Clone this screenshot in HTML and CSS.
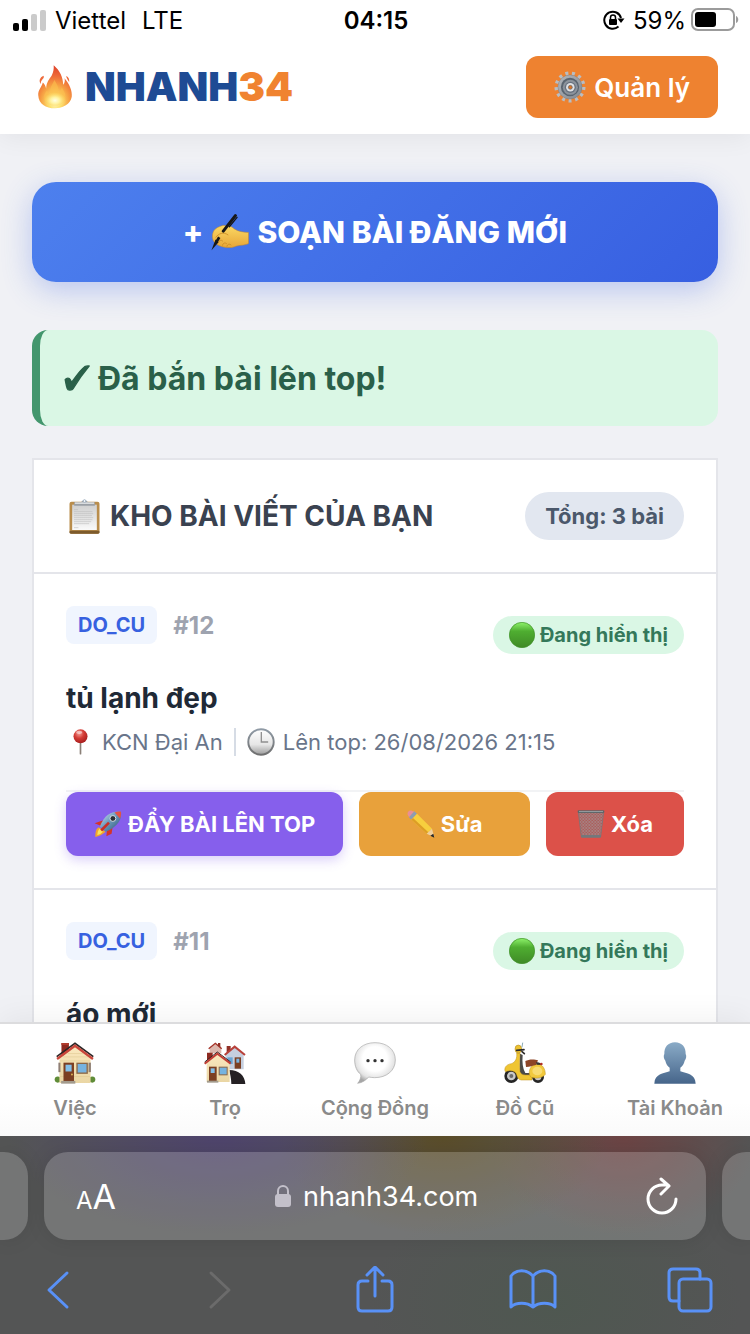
FILE: index.html
```html
<!DOCTYPE html>
<html lang="vi">
<head>
    <meta charset="UTF-8">
    <meta name="viewport" content="width=device-width, initial-scale=1.0">
    <title>NHANH34 - Quản lý bài đăng</title>
    <link rel="stylesheet" href="styles.css">
</head>
<body>
    <!-- Icon sprite -->
    <svg class="sprite" width="0" height="0" aria-hidden="true">
        <defs>
            <radialGradient id="gFire" cx="0.5" cy="0.88" r="0.85">
                <stop offset="0" stop-color="#fffbd8"/>
                <stop offset="0.2" stop-color="#fde06a"/>
                <stop offset="0.5" stop-color="#f6a043"/>
                <stop offset="0.75" stop-color="#ee6a38"/>
                <stop offset="1" stop-color="#e0452c"/>
            </radialGradient>
            <radialGradient id="gGlow">
                <stop offset="0" stop-color="#fffde6"/>
                <stop offset="0.4" stop-color="#fff3a0"/>
                <stop offset="1" stop-color="#fde06a" stop-opacity="0"/>
            </radialGradient>
            <linearGradient id="gSteel" x1="0" y1="0" x2="1" y2="1">
                <stop offset="0" stop-color="#b4b8bd"/>
                <stop offset="1" stop-color="#82888f"/>
            </linearGradient>
            <linearGradient id="gHand" x1="0" y1="0" x2="0" y2="1">
                <stop offset="0" stop-color="#fbd964"/>
                <stop offset="1" stop-color="#e8a637"/>
            </linearGradient>
            <linearGradient id="gPaper" x1="0" y1="0" x2="0" y2="1">
                <stop offset="0" stop-color="#cfcfcf"/>
                <stop offset="1" stop-color="#fafafa"/>
            </linearGradient>
            <linearGradient id="gGreen" x1="0" y1="0" x2="0" y2="1">
                <stop offset="0" stop-color="#8df26a"/>
                <stop offset="0.35" stop-color="#4fae31"/>
                <stop offset="1" stop-color="#3f8a26"/>
            </linearGradient>
            <radialGradient id="gPin" cx="0.4" cy="0.3" r="0.7">
                <stop offset="0" stop-color="#f49a92"/>
                <stop offset="0.5" stop-color="#d33a34"/>
                <stop offset="1" stop-color="#a81f1f"/>
            </radialGradient>
            <linearGradient id="gClock" x1="0" y1="0" x2="0" y2="1">
                <stop offset="0" stop-color="#ffffff"/>
                <stop offset="0.6" stop-color="#e6e6e6"/>
                <stop offset="1" stop-color="#9b9b9b"/>
            </linearGradient>
            <linearGradient id="gClockRim" x1="0" y1="0" x2="0" y2="1">
                <stop offset="0" stop-color="#8f9aa5"/>
                <stop offset="1" stop-color="#6f6f6f"/>
            </linearGradient>
            <linearGradient id="gRocket" x1="0" y1="0" x2="1" y2="1">
                <stop offset="0" stop-color="#dbe8f1"/>
                <stop offset="0.45" stop-color="#6d9cc0"/>
                <stop offset="1" stop-color="#284c6d"/>
            </linearGradient>
            <linearGradient id="gWall" x1="0" y1="0" x2="0" y2="1">
                <stop offset="0" stop-color="#fbe9bf"/>
                <stop offset="1" stop-color="#ead6a4"/>
            </linearGradient>
            <radialGradient id="gBubble" cx="0.5" cy="0.4" r="0.6">
                <stop offset="0.5" stop-color="#ffffff"/>
                <stop offset="0.8" stop-color="#e4e4e4"/>
                <stop offset="1" stop-color="#a6a6a6"/>
            </radialGradient>
            <linearGradient id="gPerson" x1="0" y1="0" x2="0" y2="1">
                <stop offset="0" stop-color="#8aabc7"/>
                <stop offset="1" stop-color="#46658a"/>
            </linearGradient>
            <pattern id="pMesh" width="9" height="9" patternUnits="userSpaceOnUse">
                <path d="M0 0 9 9M9 0 0 9" stroke="#a39a9c" stroke-width="1.6"/>
            </pattern>
        </defs>

        <symbol id="fire" viewBox="0 0 108 134">
            <path fill="url(#gFire)" d="M50 1C70 18 78 38 79 60C84 53 85 47 83 40C98 58 107 78 105 97C101 120 78 132 54 132C26 132 4 118 3 92C2 75 14 66 17 53C22 58 26 65 27 72C28 52 36 44 44 32C49 22 51 12 50 1Z"/>
            <path fill="#ee6b3c" d="M19 33C24 42 9 45 11 58C4 50 7 38 19 33ZM88 34C93 34 99 42 97 52C94 46 90 42 88 34Z"/>
            <path fill="#fbc04e" opacity="0.6" d="M52 46C62 62 66 70 64 84C70 80 74 74 74 68C86 84 90 100 80 114C70 126 38 127 26 114C16 102 22 86 30 78C32 86 36 88 40 88C36 70 46 62 52 46Z"/>
            <ellipse cx="54" cy="108" rx="34" ry="25" fill="url(#gGlow)"/>
        </symbol>

        <symbol id="gear" viewBox="0 0 96 98">
            <circle cx="48" cy="49" r="42" fill="none" stroke="#b9bdc2" stroke-width="11" pathLength="26" stroke-dasharray="0.9 1.1"/>
            <circle cx="48" cy="49" r="37" fill="url(#gSteel)" stroke="#6a7078" stroke-width="1"/>
            <circle cx="48" cy="49" r="28" fill="#5a6470"/>
            <circle cx="49" cy="50" r="23" fill="#8c939c"/>
            <circle cx="49" cy="50" r="17" fill="#687280"/>
            <circle cx="49" cy="50" r="13" fill="#dfe1e4"/>
            <circle cx="49" cy="50" r="6" fill="#d8752a" stroke="#5b626b" stroke-width="2"/>
        </symbol>

        <symbol id="writing" viewBox="0 0 112 110">
            <path fill="url(#gHand)" stroke="#c98a24" stroke-width="1.5" d="M4 62C6 48 14 42 24 38C32 34 40 32 46 36C54 34 62 38 70 45C80 52 96 54 111 55L111 88C100 94 82 92 70 97C58 102 40 100 27 95C12 90 2 80 4 62Z"/>
            <path fill="none" stroke="#c98a24" stroke-width="2.5" stroke-linecap="round" d="M14 69C22 58 36 52 50 62M22 83C24 78 30 76 34 80M34 93C34 86 42 84 46 88M47 96C48 89 55 88 59 92"/>
            <path stroke="#171717" stroke-width="9" stroke-linecap="round" d="M72 5 36 51"/>
            <path stroke="#171717" stroke-width="4" stroke-linecap="round" d="M77 10 54 38"/>
            <path fill="#171717" d="M13 76 22 84 1 108Z"/>
            <path stroke="#171717" stroke-width="8" d="M24 69 15 84"/>
        </symbol>

        <symbol id="check" viewBox="0 0 75 76">
            <path fill="currentColor" stroke="currentColor" stroke-width="4" stroke-linejoin="round" d="M3 43C7 37 15 37 18 43L22 51C34 34 47 14 60 5C64 3 69 2 73 3C55 24 40 46 27 68C23 74 11 75 9 69C6 62 5 52 3 43Z"/>
        </symbol>

        <symbol id="clipboard" viewBox="0 0 92 105">
            <rect x="1" y="8" width="90" height="96" rx="6" fill="#b98d4c"/>
            <rect x="1" y="95" width="90" height="9" rx="4" fill="#7d5b2c"/>
            <rect x="9" y="17" width="74" height="76" fill="url(#gPaper)"/>
            <path stroke="#b9b9b9" stroke-width="2" stroke-dasharray="5 1" d="M15 32H27M15 38H70M15 44H72M15 50H68M15 56H72M15 62H70M15 68H66M15 74H60M15 86H28"/>
            <path fill="#9ba0a6" d="M15 10H36C38 2 54 2 56 10H77V20H15Z"/>
            <path fill="#d9dcdf" d="M17 10H75V15H17Z"/>
            <circle cx="46" cy="6" r="4" fill="#fff" stroke="#a2b3c3" stroke-width="3"/>
        </symbol>

        <symbol id="dot" viewBox="0 0 76 76">
            <circle cx="38" cy="38" r="37" fill="url(#gGreen)" stroke="#3f8f28" stroke-width="2"/>
        </symbol>

        <symbol id="pin" viewBox="0 0 44 78">
            <path stroke="#8b8078" stroke-width="5" stroke-linecap="round" d="M22 38V74"/>
            <circle cx="22" cy="22" r="21" fill="url(#gPin)"/>
            <ellipse cx="18" cy="10" rx="9" ry="5" fill="#fff" opacity="0.5"/>
        </symbol>

        <symbol id="clock" viewBox="0 0 86 86">
            <circle cx="43" cy="43" r="39" fill="url(#gClock)" stroke="url(#gClockRim)" stroke-width="6"/>
            <path fill="none" stroke="#8f8f8f" stroke-width="4" d="M44 12V43H65"/>
        </symbol>

        <symbol id="rocket" viewBox="0 0 86 84">
            <path fill="#d4342a" d="M24 32 42 30 26 50 2 40ZM40 60 58 46 54 72 38 80Z"/>
            <path fill="#f2a52b" d="M14 52C4 60 4 70 4 82C16 80 24 76 36 66Z"/>
            <path fill="#fae45c" d="M18 56C10 64 12 70 10 76C18 74 24 70 28 64Z"/>
            <path fill="url(#gRocket)" d="M83 4C86 26 76 48 36 66L18 50C32 12 56 2 83 4Z"/>
            <path fill="#e45144" d="M83 4C84 12 82 20 80 25L63 7C70 4 76 3 83 4Z"/>
            <circle cx="58" cy="25" r="9" fill="#2b3137" stroke="#d9e2ea" stroke-width="3"/>
            <path fill="none" stroke="#c92f27" stroke-width="8" d="M22 62 46 38"/>
        </symbol>

        <symbol id="pencil" viewBox="0 0 84 84">
            <path fill="#e98f96" d="M2 14C0 6 6 0 14 2L24 6 8 24Z"/>
            <path fill="#8d9db0" d="M22 4 30 11 13 29 6 22Z"/>
            <path fill="#f7cf3e" d="M30 11 75 56 59 71 13 29Z"/>
            <path fill="#dd9d26" d="M18 24 64 67 59 71 13 29Z"/>
            <path fill="#f0cf9c" d="M75 56 82 82 59 71Z"/>
            <path fill="#262626" d="M79 71 82 83 70 77Z"/>
        </symbol>

        <symbol id="trash" viewBox="0 0 82 84">
            <path fill="#7b6a6d" fill-opacity="0.5" d="M3 6H79L70 80H12Z"/>
            <path fill="url(#pMesh)" d="M3 6H79L70 80H12Z"/>
            <path fill="none" stroke="#7c7577" stroke-width="2.5" d="M3 6 12 80M79 6 70 80"/>
            <rect x="1" y="1" width="80" height="8" rx="3" fill="#5f6669"/>
            <rect x="5" y="3" width="72" height="2" fill="#aeb4b7"/>
            <rect x="11" y="75" width="60" height="8" rx="3" fill="#73787b"/>
        </symbol>

        <symbol id="house" viewBox="0 0 122 124">
            <circle cx="10" cy="111" r="9" fill="#5f8c37"/>
            <circle cx="112" cy="111" r="9" fill="#5f8c37"/>
            <path fill="#8e2a20" d="M21 3H43V32L21 46Z"/>
            <path fill="#b03a2c" d="M21 3H43V9H21Z"/>
            <path fill="url(#gWall)" d="M15 48 62 12 107 48V121H15Z"/>
            <path fill="none" stroke="#dcc48d" stroke-width="1.5" d="M40 34H84M26 44H98M17 56H105M17 102H105"/>
            <path fill="none" stroke="#2c2626" stroke-width="5" d="M7 43 61 4 115 43"/>
            <path fill="none" stroke="#c9473b" stroke-width="7" d="M8 50 61 11 114 50"/>
            <rect x="27" y="61" width="31" height="58" fill="#7b3f22"/>
            <rect x="33" y="67" width="18" height="20" fill="#83bfe8"/>
            <circle cx="52" cy="96" r="3" fill="#d9b154"/>
            <rect x="65" y="61" width="34" height="33" fill="#8b6848"/>
            <rect x="69" y="65" width="26" height="25" fill="#76b3e0"/>
            <rect x="101" y="61" width="7" height="28" fill="#8f7f76"/>
            <rect x="12" y="61" width="6" height="28" fill="#8f7f76"/>
            <rect x="20" y="115" width="42" height="8" fill="#a39b8d"/>
        </symbol>

        <symbol id="village" viewBox="0 0 126 126">
            <path fill="#dcb7ad" d="M17 16 35 3 52 16V34H17Z"/>
            <path fill="none" stroke="#a33127" stroke-width="4" d="M14 20 34 4 53 20"/>
            <path fill="#913027" d="M42 3H49V16L42 11ZM68 12H80V24L68 32Z"/>
            <path fill="#c5cfdf" d="M65 36 92 15 119 36V82H65Z"/>
            <path fill="none" stroke="#b8413a" stroke-width="6" d="M62 39 92 14 123 39"/>
            <rect x="92" y="46" width="19" height="34" fill="#7b3f22"/>
            <rect x="97" y="50" width="9" height="12" fill="#79b5e3"/>
            <rect x="70" y="46" width="16" height="20" fill="#69a5d4"/>
            <path fill="#252124" d="M76 84C104 84 123 100 124 126H82C82 108 78 98 76 84Z"/>
            <path fill="#8e2a20" d="M9 32H26V46L9 56Z"/>
            <path fill="url(#gWall)" d="M8 62 41 36 77 62V120H8Z"/>
            <path fill="none" stroke="#2c2626" stroke-width="3" d="M2 60 40 30 80 60"/>
            <path fill="none" stroke="#c13d34" stroke-width="6" d="M2 65 40 35 80 65"/>
            <rect x="15" y="74" width="23" height="44" fill="#7b3f22"/>
            <rect x="20" y="79" width="12" height="14" fill="#83bfe8"/>
            <rect x="44" y="74" width="27" height="26" fill="#8b6848"/>
            <rect x="47" y="77" width="21" height="20" fill="#76b3e0"/>
            <rect x="9" y="116" width="34" height="6" fill="#a39b8d"/>
        </symbol>

        <symbol id="bubble" viewBox="0 0 126 126">
            <path fill="url(#gBubble)" stroke="#a8a8a8" stroke-width="2" d="M63 2C98 2 124 22 124 54C124 86 98 107 62 107C56 107 50 106 44 105C36 114 26 122 11 124C18 116 22 106 20 97C8 88 2 72 2 54C2 22 28 2 63 2Z"/>
            <circle cx="42" cy="56" r="5" fill="#333"/>
            <circle cx="63" cy="56" r="5" fill="#333"/>
            <circle cx="84" cy="56" r="5" fill="#333"/>
        </symbol>

        <symbol id="scooter" viewBox="0 0 126 124">
            <circle cx="22" cy="101" r="17" fill="#c9c9c9" stroke="#252525" stroke-width="8"/>
            <circle cx="22" cy="101" r="6" fill="#6b6b6b"/>
            <circle cx="102" cy="104" r="14" fill="#c9c9c9" stroke="#252525" stroke-width="8"/>
            <path fill="#4a4a48" d="M48 34 56 38C54 60 56 78 64 92H84V108H46Z"/>
            <path fill="#efc532" stroke="#c1921d" stroke-width="1.5" d="M38 32H48C46 52 46 72 48 88C50 94 56 98 64 98H84V113H52C44 112 40 106 38 97C34 86 22 82 4 88C-1 78 6 66 22 64C34 60 40 48 38 32Z"/>
            <path fill="#f1c93d" stroke="#c1921d" stroke-width="1.5" d="M76 88C78 72 88 66 102 65C116 66 124 80 124 96C118 106 96 110 82 105C76 100 75 94 76 88Z"/>
            <ellipse cx="100" cy="86" rx="15" ry="13" fill="#f8dc72"/>
            <path fill="#8d4527" d="M64 56C74 50 92 50 102 54L96 68C86 70 78 74 66 74Z"/>
            <path fill="#333" d="M96 60C104 58 110 62 114 68L98 67Z"/>
            <ellipse cx="43" cy="20" rx="10" ry="12" fill="#edc231" stroke="#a8801d" stroke-width="1.5"/>
            <path fill="none" stroke="#2b2b2b" stroke-width="5" stroke-linecap="round" d="M38 24 60 22M54 28 61 34"/>
            <path fill="none" stroke="#89a9b6" stroke-width="3" stroke-linecap="round" d="M54 14 56 2"/>
            <circle cx="112" cy="65" r="4" fill="#b12f25"/>
        </symbol>

        <symbol id="person" viewBox="0 0 126 126">
            <path fill="url(#gPerson)" d="M63 1C84 1 96 16 95 36C98 42 97 50 92 56C90 66 85 72 79 77V88C98 94 124 96 125 125H1C2 96 28 94 47 88V77C41 72 36 66 34 56C29 50 28 42 31 36C30 16 42 1 63 1Z"/>
        </symbol>
    </svg>

    <div class="status-bar">
        <div class="status-left">
            <svg class="signal" viewBox="0 0 33 21" aria-hidden="true">
                <rect x="0" y="13" width="6" height="8" rx="2"/>
                <rect x="9" y="9" width="6" height="12" rx="2"/>
                <rect x="18" y="4" width="6" height="17" rx="2" fill="#cbcbcb"/>
                <rect x="27" y="0" width="6" height="21" rx="2" fill="#cbcbcb"/>
            </svg>
            <span class="carrier">Viettel</span>
            <span>LTE</span>
        </div>
        <div class="status-time">04:15</div>
        <div class="status-right">
            <svg class="rotation" viewBox="0 0 22 20" aria-hidden="true">
                <path fill="none" stroke="#000" stroke-width="2" d="M18 8A8.5 8.5 0 1 0 15.5 16.5"/>
                <path d="M14.5 8.5H21.5L18 13Z"/>
                <rect x="6" y="9" width="8" height="6" rx="1"/>
                <path fill="none" stroke="#000" stroke-width="1.5" d="M7.5 9V7.5A2.5 2.5 0 0 1 12.5 7.5V9"/>
            </svg>
            <span>59%</span>
            <svg class="battery" viewBox="0 0 48 24" aria-hidden="true">
                <rect x="1" y="1" width="42" height="21" rx="6" fill="none" stroke="#9b9b9b" stroke-width="2"/>
                <rect x="4" y="4" width="21" height="15" rx="3"/>
                <path fill="#9b9b9b" d="M45 8C48 9 48 14 45 15Z"/>
            </svg>
        </div>
    </div>

    <header class="header">
        <a class="logo" href="#">
            <svg class="logo-icon" aria-hidden="true"><use href="#fire"/></svg>
            <span>NHANH<span class="logo-accent">34</span></span>
        </a>
        <button class="btn-manage" type="button">
            <svg aria-hidden="true"><use href="#gear"/></svg>
            Quản lý
        </button>
    </header>

    <main class="content">
        <button class="btn-create" type="button">
            +
            <svg aria-hidden="true"><use href="#writing"/></svg>
            SOẠN BÀI ĐĂNG MỚI
        </button>

        <div class="alert" role="status">
            <svg aria-hidden="true"><use href="#check"/></svg>
            Đã bắn bài lên top!
        </div>

        <section class="card">
            <div class="card-header">
                <h1>
                    <svg aria-hidden="true"><use href="#clipboard"/></svg>
                    KHO BÀI VIẾT CỦA BẠN
                </h1>
                <span class="total">Tổng: 3 bài</span>
            </div>

            <article class="post">
                <div class="post-top">
                    <div class="post-ids">
                        <span class="tag">DO_CU</span>
                        <span class="post-id">#12</span>
                    </div>
                    <span class="state"><svg aria-hidden="true"><use href="#dot"/></svg>Đang hiển thị</span>
                </div>
                <h2>tủ lạnh đẹp</h2>
                <div class="meta">
                    <span class="place"><svg class="pin" aria-hidden="true"><use href="#pin"/></svg>KCN Đại An</span>
                    <span class="time"><svg class="clock" aria-hidden="true"><use href="#clock"/></svg>Lên top: 26/08/2026 21:15</span>
                </div>
                <div class="actions">
                    <button class="btn btn-push" type="button"><svg aria-hidden="true"><use href="#rocket"/></svg>ĐẨY BÀI LÊN TOP</button>
                    <button class="btn btn-edit" type="button"><svg aria-hidden="true"><use href="#pencil"/></svg>Sửa</button>
                    <button class="btn btn-delete" type="button"><svg aria-hidden="true"><use href="#trash"/></svg>Xóa</button>
                </div>
            </article>

            <article class="post">
                <div class="post-top">
                    <div class="post-ids">
                        <span class="tag">DO_CU</span>
                        <span class="post-id">#11</span>
                    </div>
                    <span class="state"><svg aria-hidden="true"><use href="#dot"/></svg>Đang hiển thị</span>
                </div>
                <h2>áo mới</h2>
            </article>
        </section>
    </main>

    <nav class="bottom-nav">
        <a href="#"><svg aria-hidden="true"><use href="#house"/></svg>Việc</a>
        <a href="#"><svg aria-hidden="true"><use href="#village"/></svg>Trọ</a>
        <a href="#"><svg aria-hidden="true"><use href="#bubble"/></svg>Cộng Đồng</a>
        <a href="#"><svg aria-hidden="true"><use href="#scooter"/></svg>Đồ Cũ</a>
        <a href="#"><svg aria-hidden="true"><use href="#person"/></svg>Tài Khoản</a>
    </nav>

    <footer class="browser">
        <div class="address-row">
            <div class="side-tab side-left"></div>
            <div class="address-bar">
                <button class="text-size" type="button" aria-label="Cỡ chữ"><span>A</span>A</button>
                <label class="url">
                    <svg viewBox="0 0 16 22" aria-hidden="true">
                        <rect x="0" y="9" width="16" height="13" rx="3" fill="#c3c0ca"/>
                        <path d="M3 10V6A5 5 0 0 1 13 6V10" fill="none" stroke="#c3c0ca" stroke-width="2"/>
                    </svg>
                    <input type="text" value="nhanh34.com" aria-label="Địa chỉ" readonly>
                </label>
                <button class="reload" type="button" aria-label="Tải lại">
                    <svg viewBox="0 0 32 38" aria-hidden="true">
                        <path d="M20 8H16A14 14 0 1 0 30 22M15 2 23 9 15 17"/>
                    </svg>
                </button>
            </div>
            <div class="side-tab side-right"></div>
        </div>
        <div class="toolbar">
            <button type="button" aria-label="Quay lại">
                <svg viewBox="0 0 48 48"><path d="M31 7 13 24 31 41"/></svg>
            </button>
            <button type="button" aria-label="Tiến" disabled>
                <svg viewBox="0 0 48 48"><path d="M17 7 35 24 17 41"/></svg>
            </button>
            <button type="button" aria-label="Chia sẻ">
                <svg viewBox="0 0 48 48"><path d="M17 15H11Q7 15 7 19V41Q7 45 11 45H37Q41 45 41 41V19Q41 15 37 15H31M24 30V1M16 9 24 1 32 9"/></svg>
            </button>
            <button type="button" aria-label="Dấu trang">
                <svg viewBox="0 0 48 48"><path d="M24 10C18 3 7 3 2 10V41C7 36 18 36 24 41C30 36 41 36 46 41V10C41 3 30 3 24 10V41"/></svg>
            </button>
            <button type="button" aria-label="Các tab">
                <svg viewBox="0 0 48 48"><rect x="13" y="13" width="32" height="32" rx="4"/><path d="M13 35H7Q3 35 3 31V7Q3 3 7 3H30Q34 3 34 7V13"/></svg>
            </button>
        </div>
    </footer>
</body>
</html>
```
FILE: styles.css
```css
* {
    box-sizing: border-box;
}
body {
    font-family: Inter, "Liberation Sans", sans-serif;
    margin: 0;
    height: 100vh;
    display: flex;
    flex-direction: column;
    overflow: hidden;
    background-color: #f0f1f5;
}
button, input {
    font-family: inherit;
    border: none;
    padding: 0;
    background: none;
}
button {
    cursor: pointer;
}
svg {
    flex: none;
}
.sprite {
    position: absolute;
}

/* Status bar */
.status-bar {
    display: grid;
    grid-template-columns: 1fr auto 1fr;
    align-items: center;
    height: 40px;
    padding: 0 11px 0 13px;
    background: #fff;
    font-size: 24px;
    color: #000;
    position: relative;
    z-index: 2;
    flex: none;
}
.status-left, .status-right {
    display: flex;
    align-items: center;
}
.status-right {
    justify-content: flex-end;
}
.status-time {
    font-weight: 600;
}
.signal {
    width: 33px;
    height: 21px;
}
.carrier {
    margin: 0 16px 0 9px;
}
.rotation {
    width: 22px;
    height: 20px;
    margin-right: 8px;
}
.battery {
    width: 48px;
    height: 24px;
    margin-left: 5px;
}

/* Header */
.header {
    display: flex;
    justify-content: space-between;
    align-items: center;
    padding: 16px 32px;
    background: #fff;
    box-shadow: 0 4px 24px rgba(0, 0, 0, 0.06);
    position: relative;
    z-index: 1;
    flex: none;
}
.logo {
    display: flex;
    align-items: center;
    gap: 12px;
    padding-left: 5px;
    font-size: 40px;
    font-weight: 900;
    line-height: 46px;
    color: #1e4b94;
    text-decoration: none;
}
.logo-icon {
    width: 36px;
    height: 44px;
}
.logo-accent {
    color: #f08330;
}
.btn-manage {
    display: flex;
    align-items: center;
    gap: 8px;
    height: 62px;
    padding: 0 28px;
    border-radius: 12px;
    background: #ee8230;
    color: #fff;
    font-size: 26px;
    font-weight: 600;
}
.btn-manage svg {
    width: 32px;
    height: 32px;
}

/* Content */
.content {
    flex: 1;
    min-height: 0;
    overflow: hidden;
    padding: 48px 32px 0;
}
.btn-create {
    display: flex;
    justify-content: center;
    align-items: center;
    gap: 8px;
    width: 100%;
    height: 100px;
    border-radius: 24px;
    background: linear-gradient(135deg, #4d80ee, #375fe1);
    box-shadow: 0 8px 30px rgba(55, 95, 225, 0.3);
    color: #fff;
    font-size: 30px;
    font-weight: 800;
}
.btn-create svg {
    width: 38px;
    height: 37px;
}
.alert {
    display: flex;
    align-items: center;
    gap: 8px;
    height: 96px;
    margin: 48px 0 32px;
    padding: 0 24px;
    border-left: 8px solid #43966d;
    border-radius: 16px;
    background: #daf7e5;
    color: #2a6049;
    font-size: 32px;
    font-weight: 700;
}
.alert svg {
    width: 26px;
    height: 26px;
}
.card {
    border: 2px solid #e4e5ea;
    background: #fff;
}
.card-header {
    display: flex;
    justify-content: space-between;
    align-items: center;
    padding: 32px;
    border-bottom: 2px solid #e4e5ea;
}
.card-header h1 {
    display: flex;
    align-items: center;
    gap: 10px;
    margin: 0;
    padding-left: 3px;
    font-size: 28px;
    font-weight: 700;
    color: #3a4250;
}
.card-header h1 svg {
    width: 31px;
    height: 35px;
}
.total {
    padding: 0 20px;
    border-radius: 24px;
    background: #e2e7f0;
    color: #4b586b;
    font-size: 22px;
    font-weight: 700;
    line-height: 48px;
}

/* Posts */
.post {
    padding: 32px;
    border-bottom: 2px solid #e4e5ea;
}
.post-top {
    display: flex;
    justify-content: space-between;
    min-height: 48px;
}
.post-ids {
    display: flex;
    align-items: center;
    align-self: flex-start;
    gap: 16px;
}
.tag {
    padding: 0 12px;
    border-radius: 8px;
    background: #f0f5fe;
    color: #3761e0;
    font-size: 20px;
    font-weight: 700;
    line-height: 38px;
}
.post-id {
    color: #9ea3af;
    font-size: 24px;
    font-weight: 700;
}
.state {
    display: flex;
    align-items: center;
    align-self: flex-end;
    gap: 5px;
    padding: 0 16px;
    border-radius: 20px;
    background: #daf7e5;
    color: #34785a;
    font-size: 20px;
    font-weight: 700;
    line-height: 38px;
}
.state svg {
    width: 26px;
    height: 26px;
}
.post h2 {
    margin: 24px 0 8px;
    color: #202936;
    font-size: 28px;
    font-weight: 700;
    line-height: 40px;
}
.meta {
    display: flex;
    align-items: center;
    margin-bottom: 32px;
    color: #69758a;
    font-size: 22px;
    line-height: 32px;
}
.place, .time {
    display: flex;
    align-items: center;
}
.time {
    margin-left: 11px;
    padding-left: 11px;
    border-left: 2px solid #d6dce5;
    line-height: 26px;
}
.pin {
    width: 15px;
    height: 26px;
    margin: 0 14px 0 7px;
}
.clock {
    width: 28px;
    height: 28px;
    margin-right: 8px;
}
.actions {
    display: grid;
    grid-template-columns: 13fr 8fr 138px;
    gap: 16px;
    border-top: 2px solid #f2f3f5;
}
.btn {
    display: flex;
    justify-content: center;
    align-items: center;
    gap: 6px;
    height: 64px;
    border-radius: 12px;
    color: #fff;
    font-size: 22px;
    font-weight: 700;
}
.btn svg {
    width: 28px;
    height: 28px;
}
.btn-push {
    background: #865fec;
    box-shadow: 0 4px 12px rgba(134, 95, 236, 0.3);
}
.btn-edit {
    background: #e8a13b;
}
.btn-delete {
    background: #dc5149;
}

/* Bottom navigation */
.bottom-nav {
    display: grid;
    grid-template-columns: repeat(5, 1fr);
    padding: 18px 0 14px;
    border-top: 2px solid #dcdcde;
    background: linear-gradient(#fff 70%, #fafafa);
    box-shadow: 0 -4px 30px rgba(0, 0, 0, 0.06);
    position: relative;
    flex: none;
}
.bottom-nav a {
    display: flex;
    flex-direction: column;
    align-items: center;
    gap: 10px;
    color: #8a8a8a;
    font-size: 20px;
    font-weight: 600;
    line-height: 28px;
    text-decoration: none;
}
.bottom-nav svg {
    width: 42px;
    height: 42px;
}

/* Browser bars */
.browser {
    position: relative;
    flex: none;
    padding: 16px 0 20px;
    background:
        radial-gradient(ellipse 28% 50% at 29% 0, rgba(78, 66, 112, 0.9), transparent),
        radial-gradient(ellipse 22% 50% at 59% 0, rgba(92, 76, 36, 0.9), transparent),
        radial-gradient(ellipse 18% 50% at 83% 0, rgba(112, 66, 66, 0.9), transparent),
        radial-gradient(ellipse 25% 60% at 74% 85%, rgba(78, 88, 80, 0.9), transparent),
        #545555;
}
.address-row {
    display: flex;
    gap: 16px;
}
.side-tab {
    width: 28px;
    height: 88px;
    background: rgba(255, 255, 255, 0.19);
    box-shadow: 0 0 20px rgba(0, 0, 0, 0.1);
}
.side-left {
    border-radius: 0 24px 24px 0;
}
.side-right {
    border-radius: 24px 0 0 24px;
}
.address-bar {
    flex: 1;
    display: flex;
    justify-content: space-between;
    align-items: center;
    height: 88px;
    padding: 0 28px 0 32px;
    border-radius: 24px;
    background: rgba(255, 255, 255, 0.19);
    box-shadow: 0 0 20px rgba(0, 0, 0, 0.1);
    color: #fff;
}
.text-size {
    color: #fff;
    font-size: 34px;
}
.text-size span {
    font-size: 24px;
}
.url {
    display: flex;
    align-items: center;
    gap: 12px;
}
.url svg {
    width: 16px;
    height: 22px;
}
.url input {
    width: 184px;
    color: #fff;
    font-size: 27px;
    outline: none;
}
.reload svg {
    display: block;
    width: 32px;
    height: 38px;
}
.reload path {
    fill: none;
    stroke: #fff;
    stroke-width: 3;
    stroke-linecap: round;
    stroke-linejoin: round;
}
.toolbar {
    display: flex;
    justify-content: space-between;
    padding: 26px 36px 0;
}
.toolbar svg {
    display: block;
    width: 48px;
    height: 48px;
    fill: none;
    stroke: #5991f7;
    stroke-width: 3;
    stroke-linecap: round;
    stroke-linejoin: round;
}
.toolbar button:disabled svg {
    stroke: #6b6b6b;
}
```
